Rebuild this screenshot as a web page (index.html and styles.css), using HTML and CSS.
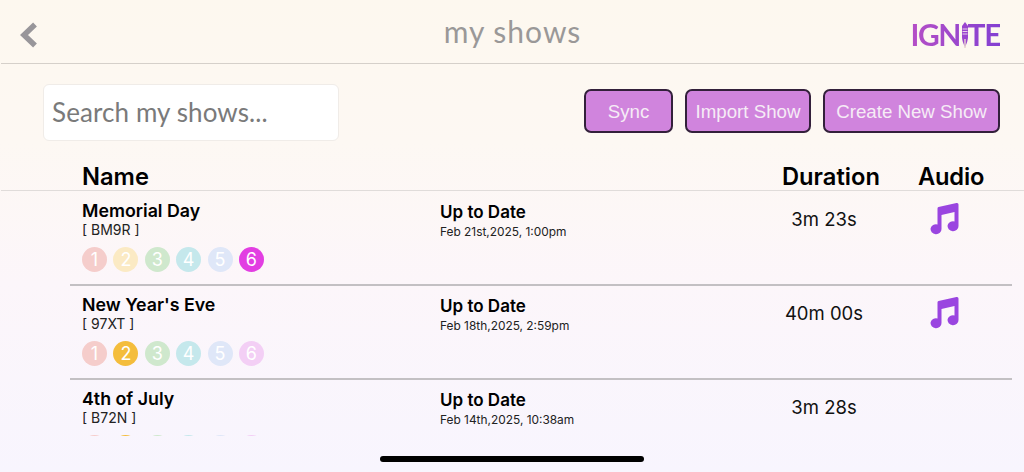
FILE: index.html
```html
<!DOCTYPE html>
<html lang="en">

<head>
    <meta charset="UTF-8">
    <meta name="viewport" content="width=device-width, initial-scale=1.0">
    <title>My Shows</title>
    <link rel="stylesheet" href="styles.css">
</head>

<body>

    <!-- HEADER -->
    <header class="topbar">
        <svg class="back" width="20" height="30" viewBox="0 0 20 30">
            <path d="M16 4.5 L5 15 L16 25.5" fill="none" stroke="#98969a" stroke-width="5.5" />
        </svg>
        <h1>my shows</h1>
        <div class="logo">
            <span class="logoText">IGN<span class="logoI">I</span>TE</span>
            <svg class="logoMic" width="8" height="26" viewBox="0 0 8 26">
                <path d="M4 0 L7 4 V15 Q7 19 4 25 Q1 19 1 15 V4 Z" fill="#9a45cf" />
                <path d="M1.5 7 H6.5 M1.5 9.5 H6.5 M1.5 12 H6.5" stroke="#fdf8ef" stroke-width="0.8" />
                <path d="M4 17 V26" stroke="#e6d3ce" stroke-width="1.5" />
            </svg>
        </div>
    </header>

    <!-- SEARCH AND BUTTONS -->
    <div class="toolbar">
        <div class="search">Search my shows...</div>
        <div class="buttons">
            <button class="sync">Sync</button>
            <button class="import">Import Show</button>
            <button class="create">Create New Show</button>
        </div>
    </div>

    <!-- COLUMN TITLES -->
    <div class="tableHead">
        <span class="colName">Name</span>
        <span class="colDuration">Duration</span>
        <span class="colAudio">Audio</span>
    </div>

    <div class="list">

        <div class="row">
            <div class="info">
                <p class="showName">Memorial Day</p>
                <p class="code">[ BM9R ]</p>
                <div class="dots">
                    <span class="dot d1">1</span>
                    <span class="dot d2">2</span>
                    <span class="dot d3">3</span>
                    <span class="dot d4">4</span>
                    <span class="dot d5">5</span>
                    <span class="dot d6 on">6</span>
                </div>
            </div>
            <div class="status">
                <p class="statusTitle">Up to Date</p>
                <p class="statusDate">Feb 21st,2025, 1:00pm</p>
            </div>
            <div class="duration">3m 23s</div>
            <div class="audio">
                <svg width="32" height="33" viewBox="0 0 32 33">
                    <path d="M10.5 5 L28.5 1 Q30.5 0.7 30.5 2.5 V24 A5.5 5 0 1 1 26.5 19.4 V10 L13.5 13 V27 A5.5 5 0 1 1 9.5 22.4 V6.5 Q9.5 5.2 10.5 5 Z" fill="#9a45e0" />
                </svg>
            </div>
        </div>

        <div class="row">
            <div class="info">
                <p class="showName">New Year's Eve</p>
                <p class="code">[ 97XT ]</p>
                <div class="dots">
                    <span class="dot d1">1</span>
                    <span class="dot d2 on">2</span>
                    <span class="dot d3">3</span>
                    <span class="dot d4">4</span>
                    <span class="dot d5">5</span>
                    <span class="dot d6">6</span>
                </div>
            </div>
            <div class="status">
                <p class="statusTitle">Up to Date</p>
                <p class="statusDate">Feb 18th,2025, 2:59pm</p>
            </div>
            <div class="duration">40m 00s</div>
            <div class="audio">
                <svg width="32" height="33" viewBox="0 0 32 33">
                    <path d="M10.5 5 L28.5 1 Q30.5 0.7 30.5 2.5 V24 A5.5 5 0 1 1 26.5 19.4 V10 L13.5 13 V27 A5.5 5 0 1 1 9.5 22.4 V6.5 Q9.5 5.2 10.5 5 Z" fill="#9a45e0" />
                </svg>
            </div>
        </div>

        <!-- only the top edge of the dots shows above the fold here -->
        <div class="row">
            <div class="info">
                <p class="showName">4th of July</p>
                <p class="code">[ B72N ]</p>
                <div class="dots">
                    <span class="dot d1"></span>
                    <span class="dot d2 on"></span>
                    <span class="dot d3"></span>
                    <span class="dot d4"></span>
                    <span class="dot d5"></span>
                    <span class="dot d6"></span>
                </div>
            </div>
            <div class="status">
                <p class="statusTitle">Up to Date</p>
                <p class="statusDate">Feb 14th,2025, 10:38am</p>
            </div>
            <div class="duration">3m 28s</div>
            <div class="audio"></div>
        </div>

    </div>

    <div class="homeBar"></div>

</body>

</html>
```

FILE: styles.css
```css
html,
body {
    height: 100%;
}

body {
    margin: 0;
    height: 472px;
    overflow: hidden;
    position: relative;
    background: linear-gradient(180deg, #fdf8ef 0%, #fdf8f3 30%, #fcf6fa 60%, #f8f5fe 100%);
    font-family: Inter, "Liberation Sans", sans-serif;
    color: #000;
}

p {
    margin: 0;
}

/* header */
.topbar {
    height: 63px;
    margin-left: 1px;
    border-bottom: 1px solid #d5d0ca;
    display: flex;
    align-items: center;
    justify-content: space-between;
    padding: 0 24px 0 18px;
    position: relative;
}

.back {
    margin-top: 7px;
}

.topbar h1 {
    position: absolute;
    left: 0;
    right: 0;
    margin: 0 0 2px;
    text-align: center;
    font-family: Lato, sans-serif;
    font-weight: 400;
    font-size: 30px;
    letter-spacing: 1px;
    color: #9a9898;
}

.logo {
    position: relative;
    height: 34px;
    display: flex;
    align-items: center;
    margin-top: 5px;
}

.logoText {
    font-family: Lato, sans-serif;
    font-weight: 700;
    font-size: 30px;
    letter-spacing: -1.4px;
    background: linear-gradient(90deg, #b64fc6, #8340d2);
    -webkit-background-clip: text;
    background-clip: text;
    color: transparent;
}

.logoI {
    opacity: 0;
}

.logoMic {
    position: absolute;
    left: 51px;
    top: 5px;
}

/* search and buttons */
.toolbar {
    display: flex;
    justify-content: space-between;
    align-items: center;
    padding: 20px 24px 0 43px;
}

.search {
    width: 296px;
    height: 57px;
    box-sizing: border-box;
    padding-left: 8px;
    line-height: 55px;
    background: #fff;
    border: 1px solid #f0ece8;
    border-radius: 6px;
    font-family: Lato, sans-serif;
    font-size: 26px;
    letter-spacing: 0.1px;
    color: #7a7a7a;
}

.buttons {
    display: flex;
    gap: 12px;
    margin-bottom: 3px;
}

.buttons button {
    height: 44px;
    padding: 1px 0 0;
    background-color: #d084dd;
    border: 2px solid #33203b;
    border-radius: 7px;
    font-family: "Liberation Sans", sans-serif;
    font-size: 18.7px;
    color: #f6ecf6;
}

.sync {
    width: 89px;
}

.import {
    width: 126px;
}

.create {
    width: 177px;
}

/* column titles */
.tableHead {
    height: 49px;
    margin: 1px 0 0 1px;
    box-sizing: border-box;
    border-bottom: 1px solid #e0dcda;
    position: relative;
    font-weight: 600;
    font-size: 23.7px;
    line-height: 30px;
}

.tableHead span {
    position: absolute;
    top: 20px;
}

.colName {
    left: 81px;
}

.colDuration {
    left: 781px;
}

.colAudio {
    left: 917px;
    letter-spacing: -0.2px;
}

/* rows */
.list {
    height: 244px;
    overflow: hidden;
    margin: 1px 0 0 70px;
    width: 942px;
}

.row {
    height: 92px;
    border-bottom: 2px solid #c3c0c3;
    display: flex;
}

.row:last-child {
    border-bottom: none;
}

.info {
    width: 370px;
    padding: 8px 0 0 12px;
    box-sizing: border-box;
}

.showName {
    font-weight: 600;
    font-size: 17.8px;
    line-height: 21px;
}

.code {
    font-size: 14px;
    line-height: 18px;
    color: #222;
}

.dots {
    display: flex;
    gap: 6.4px;
    margin-top: 8px;
}

.dot {
    width: 25px;
    height: 25px;
    border-radius: 50%;
    color: #fff;
    font-size: 18px;
    line-height: 25px;
    text-align: center;
}

.d1 {
    background: #f5cdcb;
}

.d2 {
    background: #fbeac4;
}

.d3 {
    background: #cfe8cd;
}

.d4 {
    background: #c5e8ec;
}

.d5 {
    background: #dfe7f8;
}

.d6 {
    background: #f3cff5;
}

.d2.on {
    background: #f4bd3c;
}

.d6.on {
    background: #e23ee2;
}

.status {
    width: 300px;
    padding-top: 9px;
}

.statusTitle {
    font-weight: 600;
    font-size: 17px;
    line-height: 22px;
}

.statusDate {
    font-size: 11.9px;
    line-height: 18px;
    color: #222;
}

.duration {
    width: 168px;
    padding-top: 15px;
    text-align: center;
    font-size: 18.5px;
    line-height: 24px;
    color: #111;
}

.audio {
    padding: 10px 0 0 20px;
}

.homeBar {
    position: absolute;
    left: 380px;
    top: 456px;
    width: 264px;
    height: 6px;
    border-radius: 3px;
    background: #000;
}
```
